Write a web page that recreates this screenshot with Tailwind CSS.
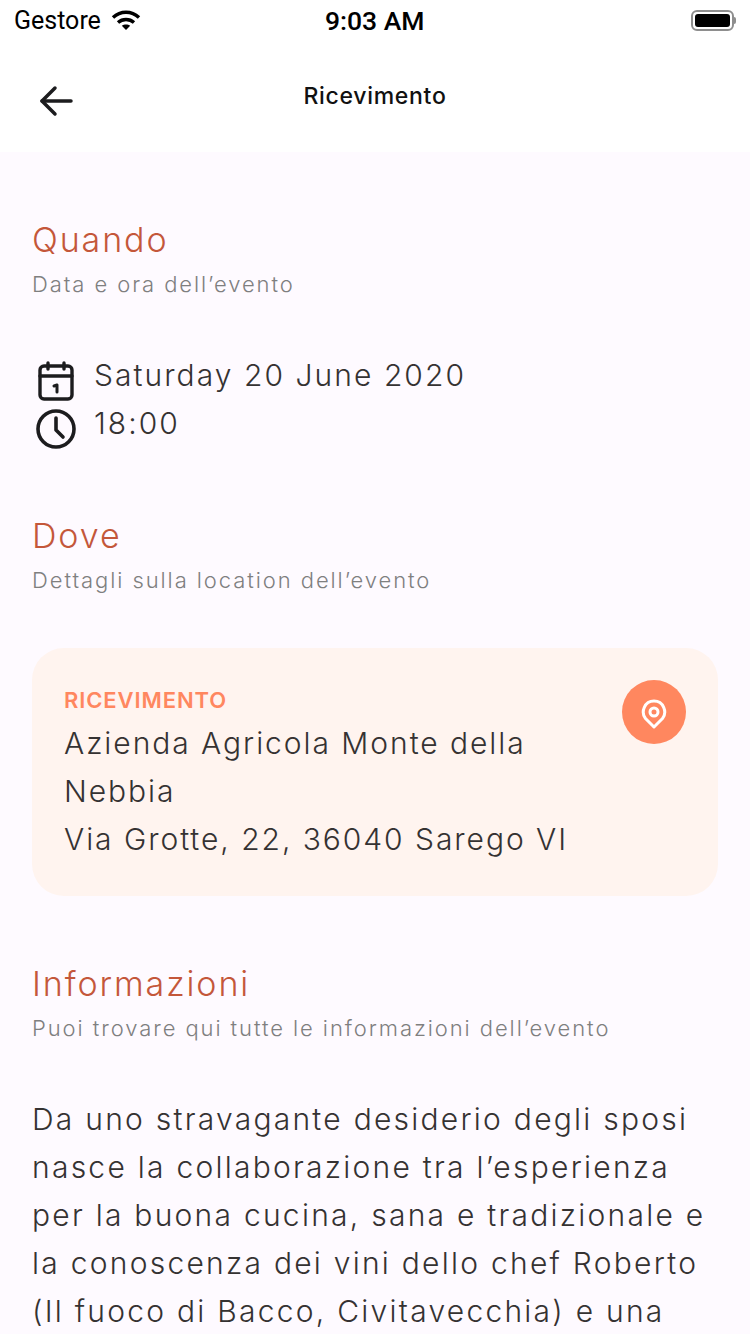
<!DOCTYPE html>
<html lang="it">
<head>
<meta charset="utf-8">
<title>Ricevimento</title>
<script src="https://cdn.jsdelivr.net/npm/@tailwindcss/browser@4"></script>
</head>
<body class="bg-[#fefaff] font-['Inter',sans-serif]">
<div class="w-[750px] h-[1334px] overflow-hidden">
    <!-- status bar + nav -->
    <div class="bg-white h-[152px]">
        <div class="h-[40px] px-[14px] flex items-center justify-between relative font-['Roboto',sans-serif] text-black">
            <div class="flex items-center gap-[10px]">
                <span class="text-[25px] leading-none">Gestore</span>
                <svg width="30" height="22" viewBox="0 0 30 22" fill="none" stroke="#000" stroke-width="3.4">
                    <path d="M2 8.500C9.500 1.500 20.500 1.500 28 8.500"/>
                    <path d="M7 13.500C11.500 9.500 18.500 9.500 23 13.500"/>
                    <path d="M15 21 10.800 16.800C13 15 17 15 19.200 16.800Z" fill="#000" stroke="none"/>
                </svg>
            </div>
            <span class="absolute left-[325px] top-[8px] text-[26.500px] leading-none font-medium">9:03 AM</span>
            <div class="flex items-center">
                <div class="w-[43px] h-[21px] border-2 border-[#8e8e8e] rounded-[6px] p-[2px]">
                    <div class="w-full h-full bg-black rounded-[3px]"></div>
                </div>
                <div class="w-[2px] h-[7px] bg-[#8e8e8e] rounded-r-sm"></div>
            </div>
        </div>
        <div class="relative h-[112px]">
            <svg class="absolute left-[38px] top-[45px]" width="38" height="32" viewBox="0 0 38 32" fill="none" stroke="#1c1c1e" stroke-width="3.5" stroke-linecap="round" stroke-linejoin="round">
                <path d="M4 16H33"/>
                <path d="M17 3 4 16 17 29"/>
            </svg>
            <div class="text-center text-[23px] leading-[28px] pt-[42px] font-medium text-[#111] tracking-[0.7px]">Ricevimento</div>
        </div>
    </div>

    <div class="px-[32px]">
        <!-- quando -->
        <h2 class="mt-[66px] text-[34px] leading-[44px] font-[350] text-[#c4573a] tracking-[1.9px]">Quando</h2>
        <p class="mt-[8px] text-[22px] leading-[28px] font-[350] text-[#7f7f7f] tracking-[1.92px]">Data e ora dell’evento</p>
        <div class="mt-[53px] flex gap-[14px] font-[350] text-[#353232]">
            <div class="flex flex-col items-center w-[48px] gap-[7px] pt-[10px]">
                <svg width="38" height="40" viewBox="0 0 38 40" fill="none" stroke="#1c1c1e" stroke-width="3.4" stroke-linecap="round" stroke-linejoin="round">
                    <rect x="3" y="5" width="32" height="33" rx="4"/>
                    <path d="M3 15H35M11 2V8M27 2V8"/>
                    <path d="M17 25 20 24V31" stroke-width="3"/>
                </svg>
                <svg width="42" height="42" viewBox="0 0 42 42" fill="none" stroke="#1c1c1e" stroke-width="3.6" stroke-linecap="round" stroke-linejoin="round">
                    <circle cx="21" cy="21" r="18"/>
                    <path d="M21 10V22L28 29"/>
                </svg>
            </div>
            <div class="text-[30px] leading-[48px] tracking-[2.05px]">
                <div>Saturday 20 June 2020</div>
                <div>18:00</div>
            </div>
        </div>

        <!-- dove -->
        <h2 class="mt-[64px] text-[34px] leading-[44px] font-[350] text-[#c4573a] tracking-[1.9px]">Dove</h2>
        <p class="mt-[8px] text-[22px] leading-[28px] font-[350] text-[#7f7f7f] tracking-[1.92px]">Dettagli sulla location dell’evento</p>
        <div class="mt-[54px] w-[686px] h-[248px] rounded-[32px] bg-[#fff4ef] px-[32px] pt-[32px] flex justify-between">
            <div class="font-[350] text-[#353232]">
                <div class="text-[22px] leading-[40px] font-semibold text-[#ff875f] tracking-[0.9px]">RICEVIMENTO</div>
                <div class="text-[30px] leading-[48px] tracking-[1.95px] w-[540px] -mt-[1px]">Azienda Agricola Monte della<br>Nebbia<br>Via Grotte, 22, 36040 Sarego VI</div>
            </div>
            <div class="w-[64px] h-[64px] rounded-full bg-[#ff875f] flex items-center justify-center shrink-0">
                <svg class="mt-[4px]" width="26" height="30" viewBox="0 0 26 30" fill="none" stroke="#fff" stroke-width="3">
                    <path d="M13 28 4.500 19.500C-0.500 13 3.500 2 13 2S26.500 13 21.500 19.500Z" stroke-linejoin="round"/>
                    <circle cx="13" cy="13" r="4"/>
                </svg>
            </div>
        </div>

        <!-- informazioni -->
        <h2 class="mt-[66px] text-[34px] leading-[44px] font-[350] text-[#c4573a] tracking-[1.9px]">Informazioni</h2>
        <p class="mt-[8px] text-[22px] leading-[28px] font-[350] text-[#7f7f7f] tracking-[1.92px]">Puoi trovare qui tutte le informazioni dell’evento</p>
        <p class="mt-[53px] w-[710px] text-[30px] leading-[48px] font-[350] tracking-[2.25px] text-[#353232]">Da uno stravagante desiderio degli sposi<br>nasce la collaborazione tra l’esperienza<br>per la buona cucina, sana e tradizionale e<br>la conoscenza dei vini dello chef Roberto<br>(Il fuoco di Bacco, Civitavecchia) e una</p>
    </div>
</div>
</body>
</html>
